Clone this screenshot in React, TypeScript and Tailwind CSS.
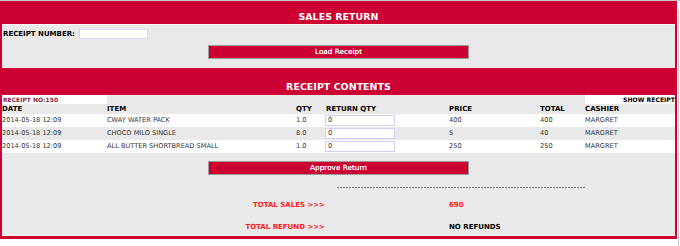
import React from "react";

const RED = "bg-[#cc0033]";

const rows = [
  { date: "2014-05-18 12:09", item: "CWAY WATER PACK", qty: "1.0", price: "400", total: "400", cashier: "MARGRET" },
  { date: "2014-05-18 12:09", item: "CHOCO MILO SINGLE", qty: "8.0", price: "5", total: "40", cashier: "MARGRET" },
  { date: "2014-05-18 12:09", item: "ALL BUTTER SHORTBREAD SMALL", qty: "1.0", price: "250", total: "250", cashier: "MARGRET" },
];

const cols = "grid grid-cols-[105px_189px_30px_123px_91px_45px_1fr]";

function Btn({ label }: { label: string }) {
  return (
    <div className="flex justify-center">
      <button className={`w-[261px] h-[14px] ${RED} border border-[#9a9a9a] text-white text-[7.3px] leading-[12px] text-center [text-shadow:0_0_0.4px_#fff]`}>
        {label}
      </button>
    </div>
  );
}

export default function App() {
  return (
    <div className="w-[680px] h-[246px] bg-white border-t border-[#c8c8c8] flex overflow-hidden font-['DejaVu_Sans',sans-serif]">
      <div className="w-[677px] flex flex-col">
        {/* Panel 1 */}
        <div className={`${RED} px-[2px] pb-[1px]`}>
          <div className="h-[23px] pt-[11px] text-center text-white font-bold text-[9.5px] leading-[10px]">
            SALES RETURN
          </div>
          <div className="h-[44px] bg-[#e9e9e9] border-t border-[#f6f6f6] pt-[4px]">
            <div className="flex items-center h-[10px] pl-[1px]">
              <span className="font-bold text-[7px] text-black leading-[10px]">RECEIPT NUMBER:</span>
              <input
                className="ml-[4px] w-[69px] h-[10px] bg-white border border-[#d8d8f4] outline-none"
                defaultValue=""
              />
            </div>
            <div className="mt-[6px]">
              <Btn label="Load Receipt" />
            </div>
          </div>
        </div>

        {/* Panel 2 */}
        <div className={`${RED} px-[2px] pb-[3px]`}>
          <div className="h-[26px] pt-[13px] text-center text-white font-bold text-[9.5px] leading-[10px]">
            RECEIPT CONTENTS
          </div>
          <div className="bg-[#e9e9e9] border-b border-[#f4f4f4] pb-[3px]">
            <div className={`${cols} h-[9px]`}>
              <div className="bg-white pl-[1px] text-[6px] font-bold text-[#8b1a4a] leading-[9px]">RECEIPT NO:150</div>
              <div className="col-span-5" />
              <div className="bg-white text-right text-[6.1px] font-bold text-black leading-[9px] whitespace-nowrap">SHOW RECEIPT</div>
            </div>
            <div className={`${cols} h-[10px] text-[7px] font-bold text-black leading-[10px]`}>
              <div>DATE</div>
              <div>ITEM</div>
              <div>QTY</div>
              <div>RETURN QTY</div>
              <div>PRICE</div>
              <div>TOTAL</div>
              <div>CASHIER</div>
            </div>
            {rows.map((r, i) => (
              <div
                key={i}
                className={`${cols} h-[13px] items-center text-[6.6px] text-[#333] ${i % 2 === 0 ? "bg-white" : "bg-[#e9e9e9]"}`}
              >
                <div>{r.date}</div>
                <div>{r.item}</div>
                <div>{r.qty}</div>
                <div className="-ml-[1px]">
                  <input
                    className="w-[70px] h-[11px] bg-white border border-[#d0d0f4] pl-[2px] text-[6.6px] text-[#333] outline-none"
                    defaultValue="0"
                  />
                </div>
                <div>{r.price}</div>
                <div>{r.total}</div>
                <div>{r.cashier}</div>
              </div>
            ))}
            <div className="mt-[8px]">
              <Btn label="Approve Return" />
            </div>
            <div className="mt-[12px] ml-[335px] w-[248px] h-px bg-[repeating-linear-gradient(90deg,#7a7a7a_0_2px,transparent_2px_3px)]" />
            <div className="mt-[12px] grid grid-cols-[323px_124px_1fr] text-[7px] font-bold leading-[10px]">
              <div className="text-right text-[#ff2020]">TOTAL SALES &gt;&gt;&gt;</div>
              <div />
              <div className="text-[#ff2020]">690</div>
            </div>
            <div className="mt-[12px] grid grid-cols-[323px_124px_1fr] text-[7px] font-bold leading-[10px]">
              <div className="text-right text-[#ff2020]">TOTAL REFUND &gt;&gt;&gt;</div>
              <div />
              <div className="text-black">NO REFUNDS</div>
            </div>
          </div>
        </div>
      </div>
      <div className="ml-[1px] mt-[9px] w-px bg-[#c8c8c8]" />
    </div>
  );
}
